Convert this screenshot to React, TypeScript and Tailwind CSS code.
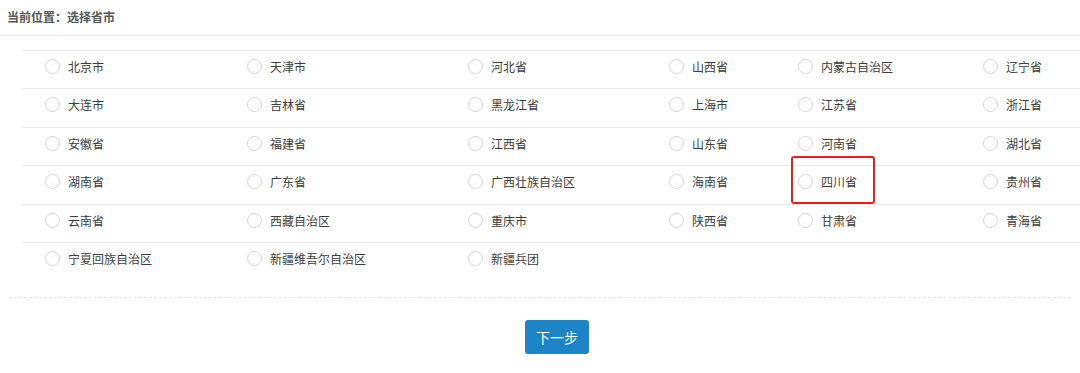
import React from "react";

const rows: string[][] = [
  ["北京市", "天津市", "河北省", "山西省", "内蒙古自治区", "辽宁省"],
  ["大连市", "吉林省", "黑龙江省", "上海市", "江苏省", "浙江省"],
  ["安徽省", "福建省", "江西省", "山东省", "河南省", "湖北省"],
  ["湖南省", "广东省", "广西壮族自治区", "海南省", "四川省", "贵州省"],
  ["云南省", "西藏自治区", "重庆市", "陕西省", "甘肃省", "青海省"],
  ["宁夏回族自治区", "新疆维吾尔自治区", "新疆兵团"],
];

function Radio({ label, marked }: { label: string; marked?: boolean }) {
  return (
    <div className="relative flex items-start gap-[8px] pl-[23px] pt-[7px]">
      <span className="mt-[1px] h-[15px] w-[15px] shrink-0 rounded-full border border-[#d6d6d6] bg-white" />
      <span className="text-[12px] leading-[17px] text-[#3c3c3c]">{label}</span>
      {marked && (
        <span className="pointer-events-none absolute left-[16px] top-[-10px] h-[48px] w-[84px] rounded-[3px] border-2 border-[#ee1c1c]" />
      )}
    </div>
  );
}

export default function App() {
  return (
    <div
      className="h-[373px] w-[1080px] overflow-hidden bg-white"
      style={{ fontFamily: '"Microsoft YaHei", "Noto Sans CJK SC", sans-serif' }}
    >
      <div className="flex h-[36px] items-center border-b border-[#ebebeb] pb-[2px] pl-[7px] text-[12px] font-semibold text-[#555]">
        当前位置：选择省市
      </div>

      <div className="ml-[22px] mt-[14px]">
        {rows.map((row, i) => (
          <div
            key={i}
            className="grid h-[38.4px] grid-cols-[202px_221px_201px_129px_185px_1fr] border-t border-[#e8eaec]"
          >
            {row.map((name) => (
              <Radio key={name} label={name} marked={name === "四川省"} />
            ))}
          </div>
        ))}
      </div>

      <div className="mx-[9px] mt-[17px] border-t border-dashed border-[#e6e6e6]" />

      <div className="pl-[525px] pt-[22px]">
        <button
          type="button"
          className="flex h-[34px] w-[64px] items-center justify-center rounded-[3px] bg-[#1d85c7] text-[14px] text-white"
        >
          下一步
        </button>
      </div>
    </div>
  );
}
